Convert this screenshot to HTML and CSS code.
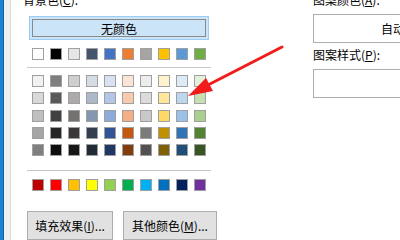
FILE: index.html
```html
<!DOCTYPE html>
<html lang="zh-CN">
<head>
    <meta charset="UTF-8">
    <title>设置单元格格式 - 填充</title>
    <link rel="stylesheet" href="styles.css">
</head>
<body>
    <div class="window">
        <div class="frame-edge"></div>
        <div class="frame-gutter"></div>

        <div class="dialog">
            <section class="fill-col">
                <div class="label">背景色(<u>C</u>):</div>
                <button class="no-color">无颜色</button>

                <div class="swatch-row">
                    <span class="swatch" style="background:#ffffff"></span>
                    <span class="swatch" style="background:#000000"></span>
                    <span class="swatch" style="background:#e7e6e6"></span>
                    <span class="swatch" style="background:#44546a"></span>
                    <span class="swatch" style="background:#4472c4"></span>
                    <span class="swatch" style="background:#ed7d31"></span>
                    <span class="swatch" style="background:#a5a5a5"></span>
                    <span class="swatch" style="background:#ffc000"></span>
                    <span class="swatch" style="background:#5b9bd5"></span>
                    <span class="swatch" style="background:#70ad47"></span>
                </div>

                <div class="sep"></div>

                <div class="swatch-grid">
                    <span class="swatch" style="background:#f2f2f2"></span>
                    <span class="swatch" style="background:#7f7f7f"></span>
                    <span class="swatch" style="background:#d0cece"></span>
                    <span class="swatch" style="background:#d6dce4"></span>
                    <span class="swatch" style="background:#d9e1f2"></span>
                    <span class="swatch" style="background:#fce4d6"></span>
                    <span class="swatch" style="background:#ededed"></span>
                    <span class="swatch" style="background:#fff2cc"></span>
                    <span class="swatch" style="background:#ddebf7"></span>
                    <span class="swatch" style="background:#e2efda"></span>

                    <span class="swatch" style="background:#d9d9d9"></span>
                    <span class="swatch" style="background:#595959"></span>
                    <span class="swatch" style="background:#aeaaaa"></span>
                    <span class="swatch" style="background:#adb9ca"></span>
                    <span class="swatch" style="background:#b4c6e7"></span>
                    <span class="swatch" style="background:#f8cbad"></span>
                    <span class="swatch" style="background:#dbdbdb"></span>
                    <span class="swatch" style="background:#ffe699"></span>
                    <span class="swatch" style="background:#bdd7ee"></span>
                    <span class="swatch" style="background:#c6e0b4"></span>

                    <span class="swatch" style="background:#bfbfbf"></span>
                    <span class="swatch" style="background:#404040"></span>
                    <span class="swatch" style="background:#757171"></span>
                    <span class="swatch" style="background:#8497b0"></span>
                    <span class="swatch" style="background:#8ea9db"></span>
                    <span class="swatch" style="background:#f4b084"></span>
                    <span class="swatch" style="background:#c9c9c9"></span>
                    <span class="swatch" style="background:#ffd966"></span>
                    <span class="swatch" style="background:#9bc2e6"></span>
                    <span class="swatch" style="background:#a9d08e"></span>

                    <span class="swatch" style="background:#a6a6a6"></span>
                    <span class="swatch" style="background:#262626"></span>
                    <span class="swatch" style="background:#3a3838"></span>
                    <span class="swatch" style="background:#333f4f"></span>
                    <span class="swatch" style="background:#305496"></span>
                    <span class="swatch" style="background:#c65911"></span>
                    <span class="swatch" style="background:#7b7b7b"></span>
                    <span class="swatch" style="background:#bf8f00"></span>
                    <span class="swatch" style="background:#2f75b5"></span>
                    <span class="swatch" style="background:#548235"></span>

                    <span class="swatch" style="background:#808080"></span>
                    <span class="swatch" style="background:#0d0d0d"></span>
                    <span class="swatch" style="background:#171616"></span>
                    <span class="swatch" style="background:#222a35"></span>
                    <span class="swatch" style="background:#203764"></span>
                    <span class="swatch" style="background:#833c0c"></span>
                    <span class="swatch" style="background:#525252"></span>
                    <span class="swatch" style="background:#806000"></span>
                    <span class="swatch" style="background:#1f4e78"></span>
                    <span class="swatch" style="background:#375623"></span>
                </div>

                <div class="sep"></div>

                <div class="swatch-row standard">
                    <span class="swatch" style="background:#c00000"></span>
                    <span class="swatch" style="background:#ff0000"></span>
                    <span class="swatch" style="background:#ffc000"></span>
                    <span class="swatch" style="background:#ffff00"></span>
                    <span class="swatch" style="background:#92d050"></span>
                    <span class="swatch" style="background:#00b050"></span>
                    <span class="swatch" style="background:#00b0f0"></span>
                    <span class="swatch" style="background:#0070c0"></span>
                    <span class="swatch" style="background:#002060"></span>
                    <span class="swatch" style="background:#7030a0"></span>
                </div>

                <div class="actions">
                    <button class="btn btn-effects">填充效果(<u>I</u>)...</button>
                    <button class="btn btn-more">其他颜色(<u>M</u>)...</button>
                </div>
            </section>

            <section class="pattern-col">
                <div class="label">图案颜色(<u>A</u>):</div>
                <div class="combo">自动</div>
                <div class="label">图案样式(<u>P</u>):</div>
                <div class="combo"></div>
            </section>
        </div>

        <!-- red annotation arrow pointing at the light blue swatch -->
        <svg class="arrow" width="400" height="240" viewBox="0 0 400 240">
            <line x1="282" y1="47" x2="206" y2="86" stroke="#f21b1b" stroke-width="3" stroke-linecap="round"/>
            <polygon points="188,96 206,78 213,91" fill="#f21b1b"/>
        </svg>
    </div>
</body>
</html>
```

FILE: styles.css
```css
* {
    box-sizing: border-box;
    margin: 0;
    padding: 0;
}

body {
    background: #fff;
    font-family: "Microsoft YaHei", "Noto Sans CJK SC", "Noto Sans", sans-serif;
    font-size: 12px;
    color: #000;
    overflow: hidden;
}

.window {
    position: relative;
    display: flex;
    width: 400px;
    height: 240px;
    overflow: hidden;
}

/* window behind + dialog border */
.frame-edge {
    flex-shrink: 0;
    width: 4px;
    background: #1883d7;
    border-right: 1px solid #1c5f94;
}

.frame-gutter {
    flex-shrink: 0;
    width: 7px;
    background: #f0f0f0;
    border-right: 1px solid #dadada;
}

.dialog {
    flex-shrink: 0;
    display: flex;
    gap: 96px;
    padding-left: 12px;
    margin-top: -8px;
}

.label {
    height: 16px;
    line-height: 16px;
    white-space: nowrap;
}

.label u {
    text-decoration-thickness: 1px;
}

/* background colour picker */
.fill-col {
    flex-shrink: 0;
    width: 194px;
    display: flex;
    flex-direction: column;
}

.no-color {
    width: 180px;
    height: 26px;
    margin: 8px 0 0 6px;
    font: inherit;
    background: #cce4f7;
    border: 1px solid #9cccf2;
    box-shadow: inset 0 0 0 2px #cce4f7, inset 0 0 0 3px #8a8a8a;
    color: #000;
}

.swatch-row {
    display: flex;
    gap: 6px;
    margin: 8px 0 0 9px;
}

.swatch-row.standard {
    margin-top: 8px;
}

.swatch {
    flex-shrink: 0;
    width: 12px;
    height: 12px;
    border: 1px solid #a0a0a0;
    display: block;
}

.sep {
    width: 184px;
    height: 1px;
    margin: 7px 0 0 4px;
    background: #c8c8c8;
}

.swatch-grid {
    display: grid;
    grid-template-columns: repeat(10, 12px);
    column-gap: 6px;
    row-gap: 5.25px;
    margin: 7px 0 7px 9px;
}

.actions {
    display: flex;
    gap: 10px;
    margin: 20px 0 0 4px;
}

.btn {
    flex-shrink: 0;
    height: 29px;
    font: inherit;
    color: #000;
    background: #e1e1e1;
    border: 1px solid #adadad;
}

.btn-effects {
    width: 86px;
}

.btn-more {
    width: 94px;
}

/* pattern settings */
.pattern-col {
    width: 160px;
    flex-shrink: 0;
    display: flex;
    flex-direction: column;
}

.pattern-col .label {
    margin-bottom: 6px;
}

.combo {
    width: 160px;
    height: 29px;
    margin-bottom: 4px;
    border: 1px solid #adadad;
    background: #fff;
    line-height: 27px;
    text-align: center;
}

.arrow {
    position: absolute;
    left: 0;
    top: 0;
    pointer-events: none;
}
```
